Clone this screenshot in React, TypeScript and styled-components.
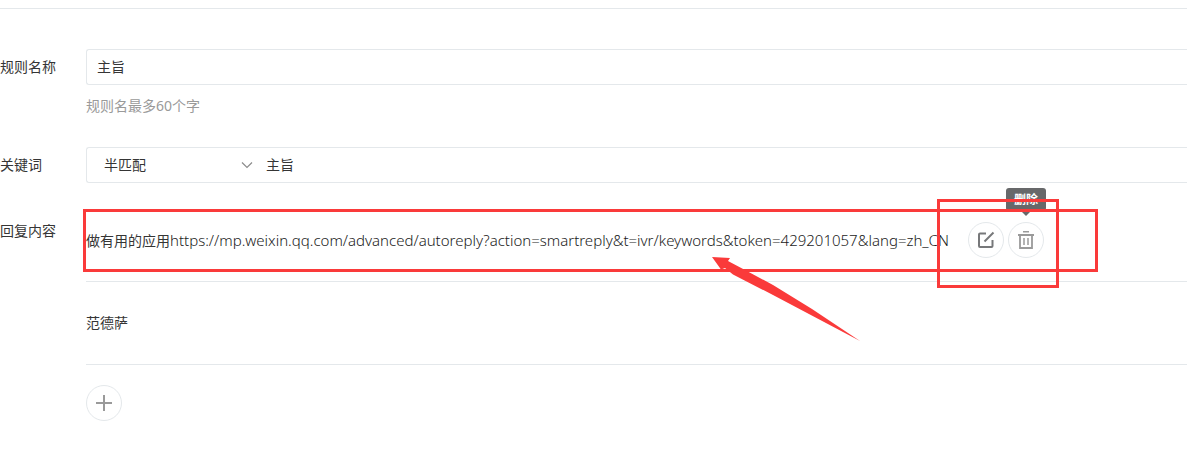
import React from "react";
import styled, { createGlobalStyle } from "styled-components";

const GlobalStyle = createGlobalStyle`
  *, *::before, *::after { box-sizing: border-box; }
  body {
    margin: 0;
    background: #fff;
    color: #353535;
    font: 14px/22px "Noto Sans", "Noto Sans CJK SC", sans-serif;
  }
  input, select, button { font: inherit; color: inherit; }
`;

const line = "#e4e8eb";
const red = "#fa3a3a";

const Page = styled.main`
  padding-top: 8px;
  overflow-x: hidden;
`;

const Form = styled.form`
  border-top: 1px solid ${line};
  padding: 40px 0;
`;

const Row = styled.div<{ $gap?: number }>`
  display: flex;
  align-items: flex-start;
  margin-bottom: ${(p) => p.$gap ?? 0}px;
`;

const Label = styled.label<{ $top?: number }>`
  flex: 0 0 86px;
  padding-top: ${(p) => p.$top ?? 7}px;
`;

const Content = styled.div`
  flex: 1;
  min-width: 0;
`;

const Field = styled.div`
  display: flex;
  height: 36px;
  border: 1px solid ${line};
  border-right: 0;
  border-radius: 3px 0 0 3px;
`;

const TextInput = styled.input`
  flex: 1;
  min-width: 0;
  padding: 0 10px;
  border: 0;
  outline: 0;
  background: transparent;
`;

const SelectBox = styled.div`
  display: flex;
  flex: 0 0 169px;
  align-items: center;
  padding-right: 3px;
`;

const Select = styled.select`
  flex: 1;
  height: 100%;
  padding: 0 0 0 17px;
  appearance: none;
  border: 0;
  outline: 0;
  background: transparent;
`;

const Hint = styled.p`
  margin: 10px 0 0;
  color: #9a9a9a;
`;

const ReplyList = styled.ul`
  position: relative;
  margin: 0 0 20px;
  padding: 0;
  list-style: none;
`;

const ReplyItem = styled.li`
  display: flex;
  align-items: center;
  height: 83px;
  border-bottom: 1px solid ${line};
  white-space: nowrap;
`;

const ReplyText = styled.span`
  flex: 0 0 auto;
  min-width: 868px;
`;

const Url = styled.span`
  color: #1c1c1c;
  font-size: 15px;
  font-weight: 320;
`;

const Actions = styled.div`
  display: flex;
  gap: 4px;
  margin-left: 14px;
`;

const RoundButton = styled.button<{ $tone?: string }>`
  position: relative;
  display: flex;
  align-items: center;
  justify-content: center;
  width: 36px;
  height: 36px;
  padding: 0;
  border: 1px solid ${line};
  border-radius: 50%;
  background: #fff;
  color: ${(p) => p.$tone ?? "#9a9a9a"};
`;

const Tooltip = styled.span`
  position: absolute;
  bottom: 46px;
  left: 50%;
  width: 40px;
  height: 23px;
  transform: translateX(-50%);
  border-radius: 3px;
  background: #67686a;
  color: #fff;
  font-size: 12px;
  font-weight: 700;
  line-height: 23px;
  text-align: center;

  &::after {
    content: "";
    position: absolute;
    top: 100%;
    left: 15px;
    border: 5px solid transparent;
    border-top-color: #67686a;
  }
`;

const Mark = styled.div<{ $x: number; $y: number; $w: number; $h: number }>`
  position: absolute;
  left: ${(p) => p.$x}px;
  top: ${(p) => p.$y}px;
  width: ${(p) => p.$w}px;
  height: ${(p) => p.$h}px;
  border: 3px solid ${red};
  pointer-events: none;
`;

const Arrow = styled.svg`
  position: absolute;
  left: 626px;
  top: 58px;
  pointer-events: none;
`;

export default function App() {
  return (
    <Page>
      <GlobalStyle />
      <Form>
        <Row $gap={30}>
          <Label htmlFor="rule">规则名称</Label>
          <Content>
            <Field>
              <TextInput id="rule" defaultValue="主旨" />
            </Field>
            <Hint>规则名最多60个字</Hint>
          </Content>
        </Row>
        <Row $gap={16}>
          <Label htmlFor="keyword">关键词</Label>
          <Content>
            <Field>
              <SelectBox>
                <Select aria-label="匹配方式" defaultValue="half">
                  <option value="half">半匹配</option>
                  <option value="full">全匹配</option>
                </Select>
                <svg width="12" height="8" viewBox="0 0 12 8" fill="none" stroke="#8c8c8c" strokeWidth="1.200">
                  <path d="M1 1.500 6 6.500 11 1.500" />
                </svg>
              </SelectBox>
              <TextInput id="keyword" defaultValue="主旨" />
            </Field>
          </Content>
        </Row>
        <Row>
          <Label as="span" $top={21}>回复内容</Label>
          <Content>
            <ReplyList>
              <ReplyItem>
                <ReplyText>
                  做有用的应用
                  <Url>https://mp.weixin.qq.com/advanced/autoreply?action=smartreply&amp;t=ivr/keywords&amp;token=429201057&amp;lang=zh_CN</Url>
                </ReplyText>
                <Actions>
                  <RoundButton type="button" aria-label="编辑" $tone="#77787a">
                    <svg width="18" height="18" viewBox="0 0 18 18" fill="none" stroke="currentColor">
                      <path d="M9 2.500H3Q2 2.500 2 3.500V15Q2 16 3 16H14.500Q15.500 16 15.500 15V9" strokeWidth="2" />
                      <path d="M7.500 10.500 16.500 1.500" strokeWidth="2" />
                    </svg>
                  </RoundButton>
                  <RoundButton type="button" aria-label="删除">
                    <svg width="18" height="18" viewBox="0 0 18 18" fill="none" stroke="currentColor">
                      <path d="M6 .75h6" strokeWidth="1.500" />
                      <path d="M1 4h16M3 4v13h12V4" strokeWidth="1.800" />
                      <path d="M7 7v7M11 7v7" strokeWidth="1.500" />
                    </svg>
                    <Tooltip role="tooltip">删除</Tooltip>
                  </RoundButton>
                </Actions>
              </ReplyItem>
              <ReplyItem>范德萨</ReplyItem>
              <Mark $x={-3} $y={10} $w={1015} $h={63} />
              <Mark $x={851} $y={0} $w={122} $h={89} />
              <Arrow width="149" height="85" viewBox="0 0 149 85" fill={red}>
                <path d="M0 0 18 1 16 4 33 13 61 28 100 52 148 84 61 38 21 17.500 13 11 9 12.500Z" />
              </Arrow>
            </ReplyList>
            <RoundButton type="button" aria-label="添加">
              <svg width="16" height="16" viewBox="0 0 16 16" stroke="currentColor" strokeWidth="2">
                <path d="M8 0v16M0 8h16" />
              </svg>
            </RoundButton>
          </Content>
        </Row>
      </Form>
    </Page>
  );
}
